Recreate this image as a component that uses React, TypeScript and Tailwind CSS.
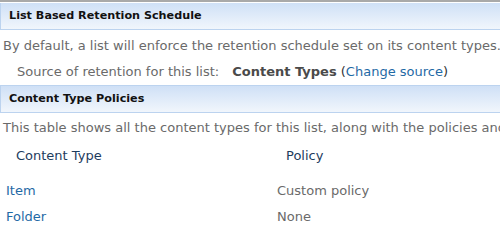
export default function App() {
  const rows = [
    { type: "Item", policy: "Custom policy" },
    { type: "Folder", policy: "None" },
  ];

  return (
    <div
      className="w-[500px] h-[252px] overflow-hidden bg-white text-[13px] text-[#6a6a6a]"
      style={{ fontFamily: '"DejaVu Sans", Verdana, sans-serif' }}
    >
      <div className="h-[2px] bg-[#a9a9a9]" />
      <div className="mt-px h-[27px] flex items-center pl-2 border-l border-b border-[#bcd3ef] bg-gradient-to-b from-[#cfe0f6] to-[#f1f6fc] text-[#111] font-bold text-[11.2px]">
        List Based Retention Schedule
      </div>

      <p className="mt-[8px] pl-[3px] whitespace-nowrap leading-[16px]">
        By default, a list will enforce the retention schedule set on its content types.
      </p>
      <p className="mt-[10px] pl-[17px] whitespace-nowrap leading-[16px]">
        Source of retention for this list:
        <span className="ml-[13px] font-bold text-[#4a4a4a]">Content Types</span>{" "}
        <span className="text-[#333]">(</span>
        <a className="text-[#1f6aa5]">Change source</a>
        <span className="text-[#333]">)</span>
      </p>

      <div className="mt-[5px] h-[28px] flex items-center pl-2 border-l border-t border-b border-[#bcd3ef] bg-gradient-to-b from-[#cfe0f6] to-[#f1f6fc] text-[#111] font-bold text-[11.2px]">
        Content Type Policies
      </div>

      <p className="mt-[7px] pl-[3px] whitespace-nowrap leading-[16px]">
        This table shows all the content types for this list, along with the policies and
      </p>

      <div className="mt-[12px] grid grid-cols-[270px_1fr] text-[#1d3c5e] leading-[16px]">
        <div className="pl-4">Content Type</div>
        <div className="pl-[16px]">Policy</div>
      </div>

      <div className="mt-[19px] flex flex-col gap-[10px]">
        {rows.map((r) => (
          <div key={r.type} className="grid grid-cols-[277px_1fr] leading-[16px]">
            <a className="pl-[6px] text-[#1f6aa5]">{r.type}</a>
            <span>{r.policy}</span>
          </div>
        ))}
      </div>
    </div>
  );
}
